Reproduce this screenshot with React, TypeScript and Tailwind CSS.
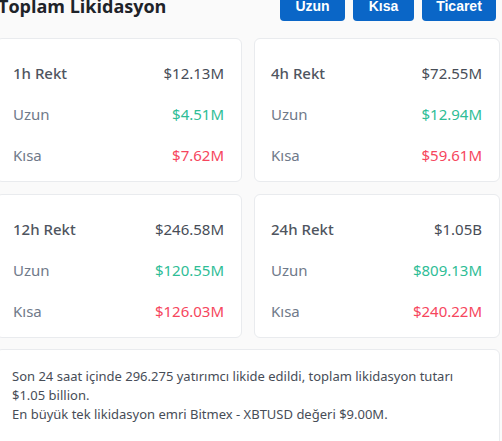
import React from 'react';

interface Stat {
  period: string;
  total: string;
  long: string;
  short: string;
}

const stats: Stat[] = [
  { period: '1h Rekt', total: '$12.13M', long: '$4.51M', short: '$7.62M' },
  { period: '4h Rekt', total: '$72.55M', long: '$12.94M', short: '$59.61M' },
  { period: '12h Rekt', total: '$246.58M', long: '$120.55M', short: '$126.03M' },
  { period: '24h Rekt', total: '$1.05B', long: '$809.13M', short: '$240.22M' },
];

function StatCard({ stat }: { stat: Stat }) {
  return (
    <div className="h-[144px] rounded-md border border-[#e9ebee] bg-white pl-4 pr-[17px] pt-[14px]">
      <div className="flex h-[41px] items-center justify-between text-[15px]">
        <span className="font-medium text-[#4f5560]">{stat.period}</span>
        <span className="text-[#474d57]">{stat.total}</span>
      </div>
      <div className="flex h-[41px] items-center justify-between text-[15px]">
        <span className="text-[#707a8a]">Uzun</span>
        <span className="text-[#2ebd96]">{stat.long}</span>
      </div>
      <div className="flex h-[41px] items-center justify-between text-[15px]">
        <span className="text-[#707a8a]">Kısa</span>
        <span className="text-[#f6465d]">{stat.short}</span>
      </div>
    </div>
  );
}

export default function App() {
  return (
    <div className="h-[441px] overflow-hidden bg-[#fafafa]">
      <div
        className="ml-[-4px] mt-[-11px] w-[505px]"
        style={{ fontFamily: '"Noto Sans", "Open Sans", sans-serif' }}
      >
        {/* Header */}
        <div className="flex h-8 items-center justify-between">
          <h1
            className="ml-[2px] mt-[2px] text-[18px] font-bold text-[#1e2329]"
            style={{ fontFamily: '"Open Sans", sans-serif' }}
          >
            Toplam Likidasyon
          </h1>
          <div
            className="mr-[5px] flex gap-2"
            style={{ fontFamily: '"Liberation Sans", Arial, sans-serif' }}
          >
            <button className="h-8 w-[65px] rounded bg-[#0a66c7] pt-[3px] text-[14px] font-bold text-white">Uzun</button>
            <button className="h-8 w-[61px] rounded bg-[#0a66c7] pt-[3px] text-[14px] font-bold text-white">Kısa</button>
            <button className="h-8 w-[74px] rounded bg-[#0a66c7] pt-[3px] text-[14px] font-bold text-white">Ticaret</button>
          </div>
        </div>

        {/* Cards */}
        <div className="mt-[17px] grid w-[504px] grid-cols-2 gap-3">
          {stats.map((s) => (
            <StatCard key={s.period} stat={s} />
          ))}
        </div>

        {/* Summary */}
        <div className="mt-[11px] h-[120px] w-[504px] rounded-md border border-[#e9ebee] bg-white pl-[15px] pt-[17px] text-[13px] leading-[19px] text-[#474d57]">
          <p>Son 24 saat içinde 296.275 yatırımcı likide edildi, toplam likidasyon tutarı</p>
          <p>$1.05 billion.</p>
          <p>En büyük tek likidasyon emri Bitmex - XBTUSD değeri $9.00M.</p>
        </div>
      </div>
    </div>
  );
}
